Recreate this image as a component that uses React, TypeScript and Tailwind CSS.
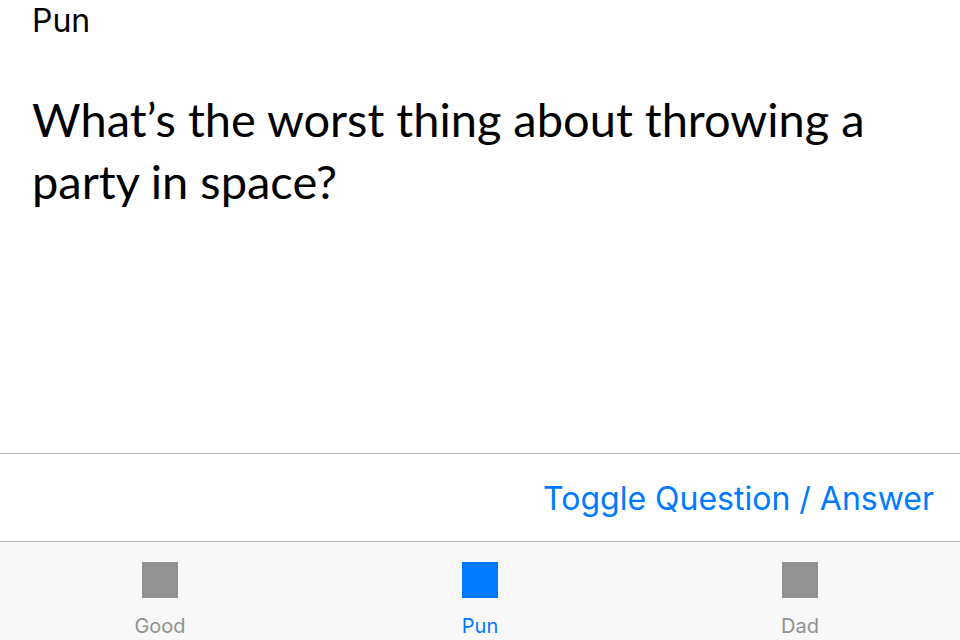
const tabs = [
  { name: "Good", active: false },
  { name: "Pun", active: true },
  { name: "Dad", active: false },
];

export default function App() {
  return (
    <div className="flex h-screen flex-col overflow-hidden bg-white font-['Inter',sans-serif] text-black">
      <main className="flex-1 px-8">
        <h1 className="text-[32px] leading-[42px]">Pun</h1>
        <p className="mt-[46px] font-['Lato',sans-serif] text-[47px] leading-[62px]">
          What’s the worst thing about throwing a party in space?
        </p>
      </main>
      <div className="flex h-[89px] items-center justify-end border-y border-[#b2b2b2] px-[26px] pt-0.5">
        <button type="button" className="text-[32px] leading-[42px] text-[#007aff]">
          Toggle Question / Answer
        </button>
      </div>
      <nav className="grid h-[98px] grid-cols-3 bg-[#f8f8f8]">
        {tabs.map((tab) => (
          <button
            key={tab.name}
            type="button"
            aria-current={tab.active ? "page" : undefined}
            className={`flex flex-col items-center gap-4 pt-5 text-xl leading-6 ${tab.active ? "text-[#007aff]" : "text-[#929292]"}`}
          >
            <span className="size-9 bg-current" />
            {tab.name}
          </button>
        ))}
      </nav>
    </div>
  );
}
